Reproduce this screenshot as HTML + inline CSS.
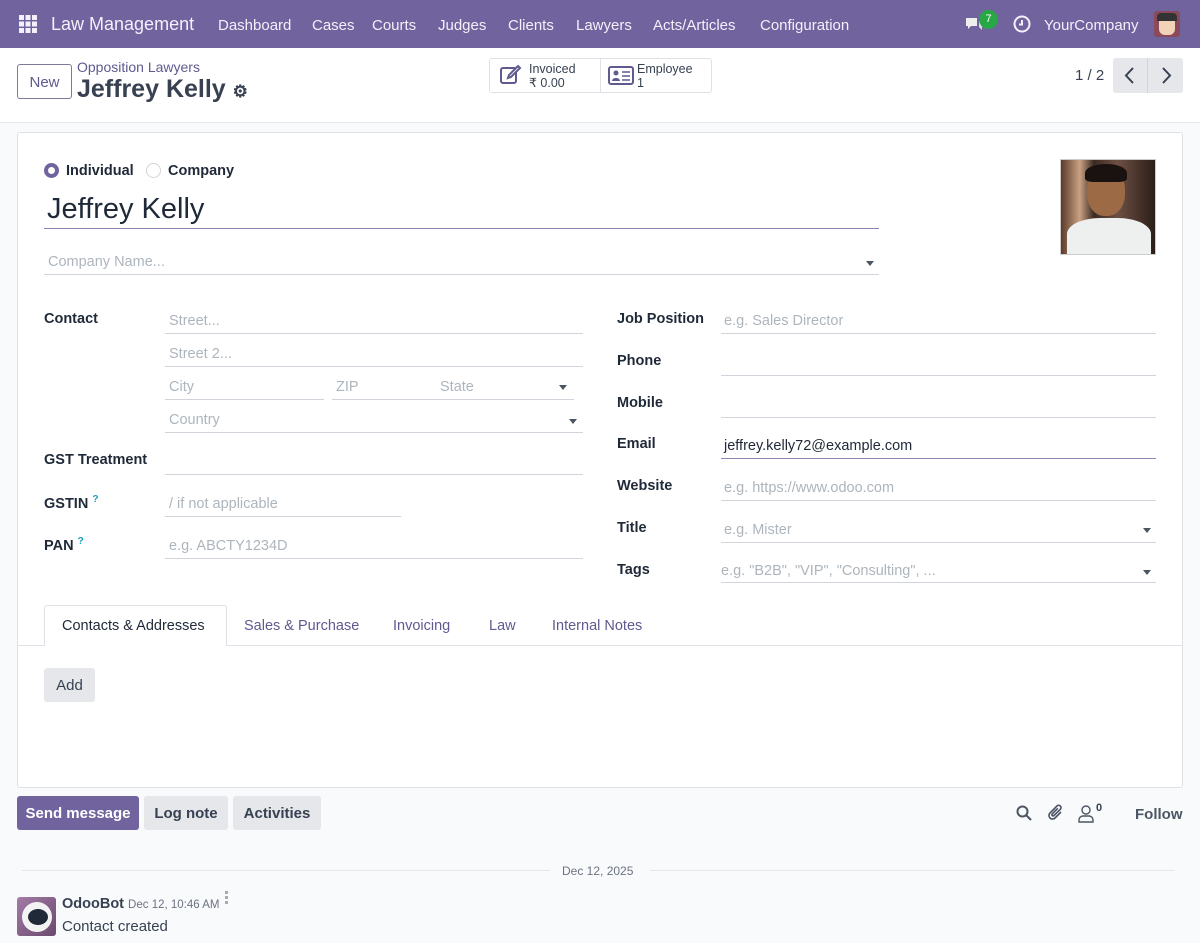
<!DOCTYPE html>
<html><head><meta charset="utf-8"><style>
*{box-sizing:border-box;margin:0;padding:0}
body{width:1200px;height:943px;overflow:hidden;background:#f9fafb;font-family:"Liberation Sans",sans-serif;color:#374151;position:relative;font-size:14px}
.a{position:absolute;white-space:nowrap}
.nav{position:absolute;left:0;top:0;width:1200px;height:48px;background:#71639e;color:#fff}
.nav .a{top:17px;font-size:15px;color:#f3f0fa}
.cp{position:absolute;left:0;top:48px;width:1200px;height:75px;background:#fff;border-bottom:1px solid #e5e7eb}
.sheet{position:absolute;left:17px;top:132px;width:1166px;height:656px;background:#fff;border:1px solid #dee2e6;border-radius:3px}
.lbl{font-weight:bold;color:#1f2937;font-size:14.5px;margin-top:2px}
.ph{color:#adb5bd;font-size:14.5px;margin-top:2px}
.ln{position:absolute;height:1px;background:#d1d5db}
.caret{position:absolute;width:0;height:0;border-left:4px solid transparent;border-right:4px solid transparent;border-top:5px solid #4b5563}
.tab{font-size:14.5px;color:#5f5a8f;top:618px}
.btn{position:absolute;border-radius:3px;font-size:15px;font-weight:bold;text-align:center;line-height:36px;height:34px}
</style></head><body>
<div class="nav">
 <svg class="a" style="left:19px;top:15px" width="18" height="18" viewBox="0 0 18 18" fill="#f3f0fa"><rect x="0" y="0" width="5" height="5"/><rect x="6.5" y="0" width="5" height="5"/><rect x="13" y="0" width="5" height="5"/><rect x="0" y="6.5" width="5" height="5"/><rect x="6.5" y="6.5" width="5" height="5"/><rect x="13" y="6.5" width="5" height="5"/><rect x="0" y="13" width="5" height="5"/><rect x="6.5" y="13" width="5" height="5"/><rect x="13" y="13" width="5" height="5"/></svg>
 <div class="a" style="left:51px;top:14px;font-size:18px">Law Management</div>
 <div class="a" style="left:218px">Dashboard</div>
 <div class="a" style="left:312px">Cases</div>
 <div class="a" style="left:372px">Courts</div>
 <div class="a" style="left:438px">Judges</div>
 <div class="a" style="left:508px">Clients</div>
 <div class="a" style="left:576px">Lawyers</div>
 <div class="a" style="left:653px">Acts/Articles</div>
 <div class="a" style="left:760px">Configuration</div>
 <svg class="a" style="left:965px;top:16px" width="22" height="18" viewBox="0 0 22 18" fill="#eee"><path d="M1 2h11v8H6l-3 3v-3H1z"/><path d="M8 11h6l3 3v-3h3V5h-6v6z" opacity=".85"/></svg>
 <div class="a" style="left:979px;top:10px;width:19px;height:19px;border-radius:50%;background:#28a745;color:#fff;font-size:11px;text-align:center;line-height:18px">7</div>
 <svg class="a" style="left:1013px;top:15px" width="18" height="18" viewBox="0 0 18 18" fill="none" stroke="#f3f0fa" stroke-width="2"><circle cx="9" cy="9" r="7.5"/><path d="M9 5v4.5H6"/></svg>
 <div class="a" style="left:1044px">YourCompany</div>
 <div class="a" style="left:1154px;top:11px;width:26px;height:26px;border-radius:3px;background:#8b4a5a;overflow:hidden"><div style="position:absolute;left:5px;top:5px;width:16px;height:19px;background:#f2d3b8;border-radius:6px"></div><div style="position:absolute;left:3px;top:2px;width:20px;height:8px;background:#333;border-radius:4px 4px 0 0"></div></div>
</div>
<div class="cp">
 <div class="a" style="left:17px;top:16px;width:55px;height:35px;border:1px solid #7c7a9a;border-radius:3px;color:#5f5a8f;font-size:15px;text-align:center;line-height:35px">New</div>
 <div class="a" style="left:77px;top:11px;font-size:14px;color:#5f5a8f">Opposition Lawyers</div>
 <div class="a" style="left:77px;top:27px;font-size:25px;font-weight:bold;color:#374151">Jeffrey Kelly <span style="font-size:17px">⚙</span></div>
 <div class="a" style="left:489px;top:10px;width:223px;height:35px;border:1px solid #dee2e6;border-radius:3px;background:#fff"></div>
 <div class="a" style="left:600px;top:10px;width:1px;height:35px;background:#dee2e6"></div>
 <svg class="a" style="left:500px;top:17px" width="22" height="20" viewBox="0 0 22 20" fill="none" stroke="#5f5a8f" stroke-width="2"><rect x="1" y="3" width="15" height="15" rx="2"/><path d="M8 13l1-3 9-9 2 2-9 9z" fill="#fff"/></svg>
 <div class="a" style="left:529px;top:14px;font-size:12.5px;line-height:14px">Invoiced<br>₹ 0.00</div>
 <svg class="a" style="left:608px;top:18px" width="26" height="19" viewBox="0 0 26 19"><rect x="1" y="1" width="24" height="17" rx="2" fill="none" stroke="#5f5a8f" stroke-width="2"/><circle cx="8" cy="7" r="2.5" fill="#5f5a8f"/><path d="M4 15c0-4 8-4 8 0z" fill="#5f5a8f"/><path d="M14 6h8M14 10h8M14 14h8" stroke="#5f5a8f" stroke-width="1.6"/></svg>
 <div class="a" style="left:637px;top:14px;font-size:12.5px;line-height:14px">Employee<br>1</div>
 <div class="a" style="left:1075px;top:19px;font-size:15px">1 / 2</div>
 <div class="a" style="left:1113px;top:10px;width:70px;height:35px;background:#e5e7eb;border-radius:3px"></div>
 <div class="a" style="left:1147px;top:10px;width:1px;height:35px;background:#d1d5db"></div>
 <svg class="a" style="left:1124px;top:19px" width="12" height="17" viewBox="0 0 12 17" fill="none" stroke="#374151" stroke-width="2"><path d="M9 1L2 8.5 9 16"/></svg>
 <svg class="a" style="left:1160px;top:19px" width="12" height="17" viewBox="0 0 12 17" fill="none" stroke="#374151" stroke-width="2"><path d="M3 1l7 7.5L3 16"/></svg>
</div>
<div class="sheet"></div>
<div class="a" style="left:44px;top:163px;width:15px;height:15px;border-radius:50%;border:4px solid #71639e;background:#fff"></div>
<div class="a lbl" style="left:66px;top:161px">Individual</div>
<div class="a" style="left:146px;top:163px;width:15px;height:15px;border-radius:50%;border:1px solid #d1d5db"></div>
<div class="a lbl" style="left:168px;top:161px">Company</div>
<div class="a" style="left:47px;top:193px;font-size:29px;color:#1f2937">Jeffrey Kelly</div>
<div class="ln" style="left:44px;top:228px;width:835px;background:#8b85b3"></div>
<div class="a ph" style="left:48px;top:252px">Company Name...</div>
<div class="caret" style="left:866px;top:261px"></div>
<div class="ln" style="left:44px;top:274px;width:835px"></div>

<div class="a lbl" style="left:44px;top:309px">Contact</div>
<div class="a ph" style="left:169px;top:311px">Street...</div><div class="ln" style="left:165px;top:333px;width:418px"></div>
<div class="a ph" style="left:169px;top:344px">Street 2...</div><div class="ln" style="left:165px;top:366px;width:418px"></div>
<div class="a ph" style="left:169px;top:377px">City</div><div class="ln" style="left:165px;top:399px;width:159px"></div>
<div class="a ph" style="left:336px;top:377px">ZIP</div><div class="a ph" style="left:440px;top:377px">State</div><div class="caret" style="left:559px;top:385px"></div><div class="ln" style="left:332px;top:399px;width:242px"></div>
<div class="a ph" style="left:169px;top:410px">Country</div><div class="caret" style="left:569px;top:419px"></div><div class="ln" style="left:165px;top:432px;width:418px"></div>
<div class="a lbl" style="left:44px;top:450px">GST Treatment</div><div class="ln" style="left:165px;top:474px;width:418px"></div>
<div class="a lbl" style="left:44px;top:492px">GSTIN <sup style="color:#17a2b8;font-size:10px">?</sup></div>
<div class="a ph" style="left:169px;top:494px">/ if not applicable</div><div class="ln" style="left:165px;top:516px;width:236px"></div>
<div class="a lbl" style="left:44px;top:534px">PAN <sup style="color:#17a2b8;font-size:10px">?</sup></div>
<div class="a ph" style="left:169px;top:536px">e.g. ABCTY1234D</div><div class="ln" style="left:165px;top:558px;width:418px"></div>

<div class="a lbl" style="left:617px;top:309px">Job Position</div>
<div class="a ph" style="left:724px;top:311px">e.g. Sales Director</div><div class="ln" style="left:721px;top:333px;width:435px"></div>
<div class="a lbl" style="left:617px;top:351px">Phone</div><div class="ln" style="left:721px;top:375px;width:435px"></div>
<div class="a lbl" style="left:617px;top:393px">Mobile</div><div class="ln" style="left:721px;top:417px;width:435px"></div>
<div class="a lbl" style="left:617px;top:434px">Email</div>
<div class="a" style="left:724px;top:438px;font-size:14.5px;color:#1f2937">jeffrey.kelly72@example.com</div><div class="ln" style="left:721px;top:458px;width:435px;background:#8b85b3"></div>
<div class="a lbl" style="left:617px;top:476px">Website</div>
<div class="a ph" style="left:724px;top:478px">e.g. https://www.odoo.com</div><div class="ln" style="left:721px;top:500px;width:435px"></div>
<div class="a lbl" style="left:617px;top:518px">Title</div>
<div class="a ph" style="left:724px;top:520px">e.g. Mister</div><div class="caret" style="left:1143px;top:528px"></div><div class="ln" style="left:721px;top:542px;width:435px"></div>
<div class="a lbl" style="left:617px;top:560px">Tags</div>
<div class="a ph" style="left:721px;top:561px">e.g. "B2B", "VIP", "Consulting", ...</div><div class="caret" style="left:1143px;top:570px"></div><div class="ln" style="left:721px;top:582px;width:435px"></div>

<div class="a" style="left:1060px;top:159px;width:96px;height:96px;border:1px solid #ccc;background:linear-gradient(90deg,#5b3a2a 0%,#c9a183 20%,#3b2a22 35%,#6e5044 60%,#2a1d18 100%);overflow:hidden">
 <div style="position:absolute;left:26px;top:8px;width:38px;height:48px;border-radius:45%;background:#9c6a45"></div>
 <div style="position:absolute;left:24px;top:4px;width:42px;height:18px;border-radius:50% 50% 20% 20%;background:#1a1210"></div>
 <div style="position:absolute;left:6px;top:58px;width:84px;height:40px;border-radius:40% 40% 0 0;background:#eef0ef"></div>
</div>

<div class="ln" style="left:18px;top:645px;width:1164px;background:#dee2e6"></div>
<div class="a" style="left:44px;top:605px;width:183px;height:41px;border:1px solid #dee2e6;border-bottom:none;background:#fff;border-radius:3px 3px 0 0"></div>
<div class="a tab" style="left:62px;color:#1f2937">Contacts &amp; Addresses</div>
<div class="a tab" style="left:244px">Sales &amp; Purchase</div>
<div class="a tab" style="left:393px">Invoicing</div>
<div class="a tab" style="left:489px">Law</div>
<div class="a tab" style="left:552px">Internal Notes</div>
<div class="btn" style="left:44px;top:668px;width:51px;background:#e5e7eb;color:#374151;font-weight:normal">Add</div>

<div class="btn" style="left:17px;top:796px;width:122px;background:#71639e;color:#fff">Send message</div>
<div class="btn" style="left:144px;top:796px;width:84px;background:#e5e7eb;color:#374151">Log note</div>
<div class="btn" style="left:233px;top:796px;width:88px;background:#e5e7eb;color:#374151">Activities</div>
<svg class="a" style="left:1016px;top:805px" width="16" height="16" viewBox="0 0 16 16" fill="none" stroke="#4b5563" stroke-width="2"><circle cx="6.5" cy="6.5" r="5"/><path d="M10 10l5 5"/></svg>
<svg class="a" style="left:1047px;top:804px" width="18" height="18" viewBox="0 0 18 18" fill="none" stroke="#4b5563" stroke-width="1.6"><path d="M14 8l-6 6a3.5 3.5 0 01-5-5l7-7a2.3 2.3 0 013.3 3.3L7 11.5a1.2 1.2 0 01-1.7-1.7l5.5-5.5"/></svg>
<svg class="a" style="left:1078px;top:805px" width="16" height="18" viewBox="0 0 16 18" fill="none" stroke="#4b5563" stroke-width="1.4"><circle cx="8" cy="5" r="4"/><path d="M1 17v-2a4 4 0 014-4h6a4 4 0 014 4v2z"/></svg>
<div class="a" style="left:1096px;top:802px;font-size:11px;font-weight:bold">0</div>
<div class="a" style="left:1135px;top:806px;font-size:15px;font-weight:bold;color:#4b5563">Follow</div>

<div class="ln" style="left:22px;top:870px;width:528px;background:#e5e7eb"></div>
<div class="a" style="left:562px;top:864px;font-size:12px;color:#6b7280">Dec 12, 2025</div>
<div class="ln" style="left:650px;top:870px;width:525px;background:#e5e7eb"></div>
<div class="a" style="left:17px;top:897px;width:39px;height:39px;border-radius:3px;background:linear-gradient(135deg,#a27ba6,#6b4a6f)"></div>
<div class="a" style="left:22px;top:902px;width:30px;height:30px;border-radius:50%;background:#f3f3f3"></div>
<div class="a" style="left:28px;top:909px;width:20px;height:16px;border-radius:50%;background:#1f2937"></div>
<div class="a" style="left:62px;top:896px;font-weight:bold;font-size:14.5px;color:#374151">OdooBot <span style="font-weight:normal;font-size:11.5px;color:#6b7280">Dec 12, 10:46 AM</span></div>
<div class="a" style="left:225px;top:891px;width:3px;height:14px;background:repeating-linear-gradient(#aaa 0 3px,transparent 3px 5px)"></div>
<div class="a" style="left:62px;top:918px;font-size:15px;color:#374151">Contact created</div>
</body></html>
